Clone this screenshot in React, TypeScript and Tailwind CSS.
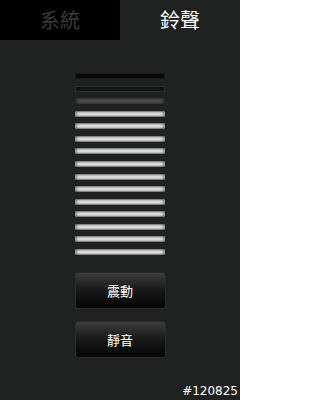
import React from "react";

const litBar =
  "h-[6px] w-[90px] bg-[linear-gradient(to_bottom,#7c7c7c,#c4c4c4_25%,#e4e4e4_50%,#c8c8c8_75%,#767676)] shadow-[inset_3px_0_3px_-1px_rgba(0,0,0,0.35),inset_-3px_0_3px_-1px_rgba(0,0,0,0.35)]";

export default function App() {
  const lit = Array.from({ length: 12 });
  return (
    <div
      className="relative flex h-[400px] w-[240px] flex-col bg-[#202221] text-white"
      style={{ fontFamily: '"Noto Sans CJK TC", "Noto Sans", sans-serif' }}
    >
      <div className="flex h-[40px]">
        <div className="flex w-[120px] items-center justify-center bg-black text-[20px] leading-none text-[#3a3a3a]">
          系統
        </div>
        <div className="flex flex-1 items-center justify-center text-[20px] leading-none text-white">
          鈴聲
        </div>
      </div>

      <div className="mt-[33px] flex flex-col items-center gap-[6.57px]">
        <div className="h-[6px] w-[90px] border border-[#1a1a1a] bg-[#090909]" />
        <div className="h-[6px] w-[90px] border border-[#2c2c2c] bg-[#151515]" />
        <div className="h-[6px] w-[90px] bg-[linear-gradient(to_bottom,#3a3a3a,#4e4e4e_50%,#3a3a3a)] shadow-[inset_3px_0_3px_-1px_rgba(0,0,0,0.4),inset_-3px_0_3px_-1px_rgba(0,0,0,0.4)]" />
        {lit.map((_, i) => (
          <div key={i} className={litBar} />
        ))}
      </div>

      <div className="mt-[17px] flex flex-col items-center gap-[12px]">
        <button className="flex h-[37px] w-[91px] items-center justify-center rounded-[3px] border border-[#2b2b2b] bg-[linear-gradient(to_bottom,#3d3d3d,#1a1a1a_45%,#050505)] text-[13px] text-white">
          震動
        </button>
        <button className="flex h-[37px] w-[91px] items-center justify-center rounded-[3px] border border-[#2b2b2b] bg-[linear-gradient(to_bottom,#3d3d3d,#1a1a1a_45%,#050505)] text-[13px] text-white">
          靜音
        </button>
      </div>

      <div
        className="mt-auto self-end pr-[2px] pb-[3px] text-[12px] leading-none text-white"
        style={{ fontFamily: '"DejaVu Sans", sans-serif' }}
      >
        #120825
      </div>
    </div>
  );
}
